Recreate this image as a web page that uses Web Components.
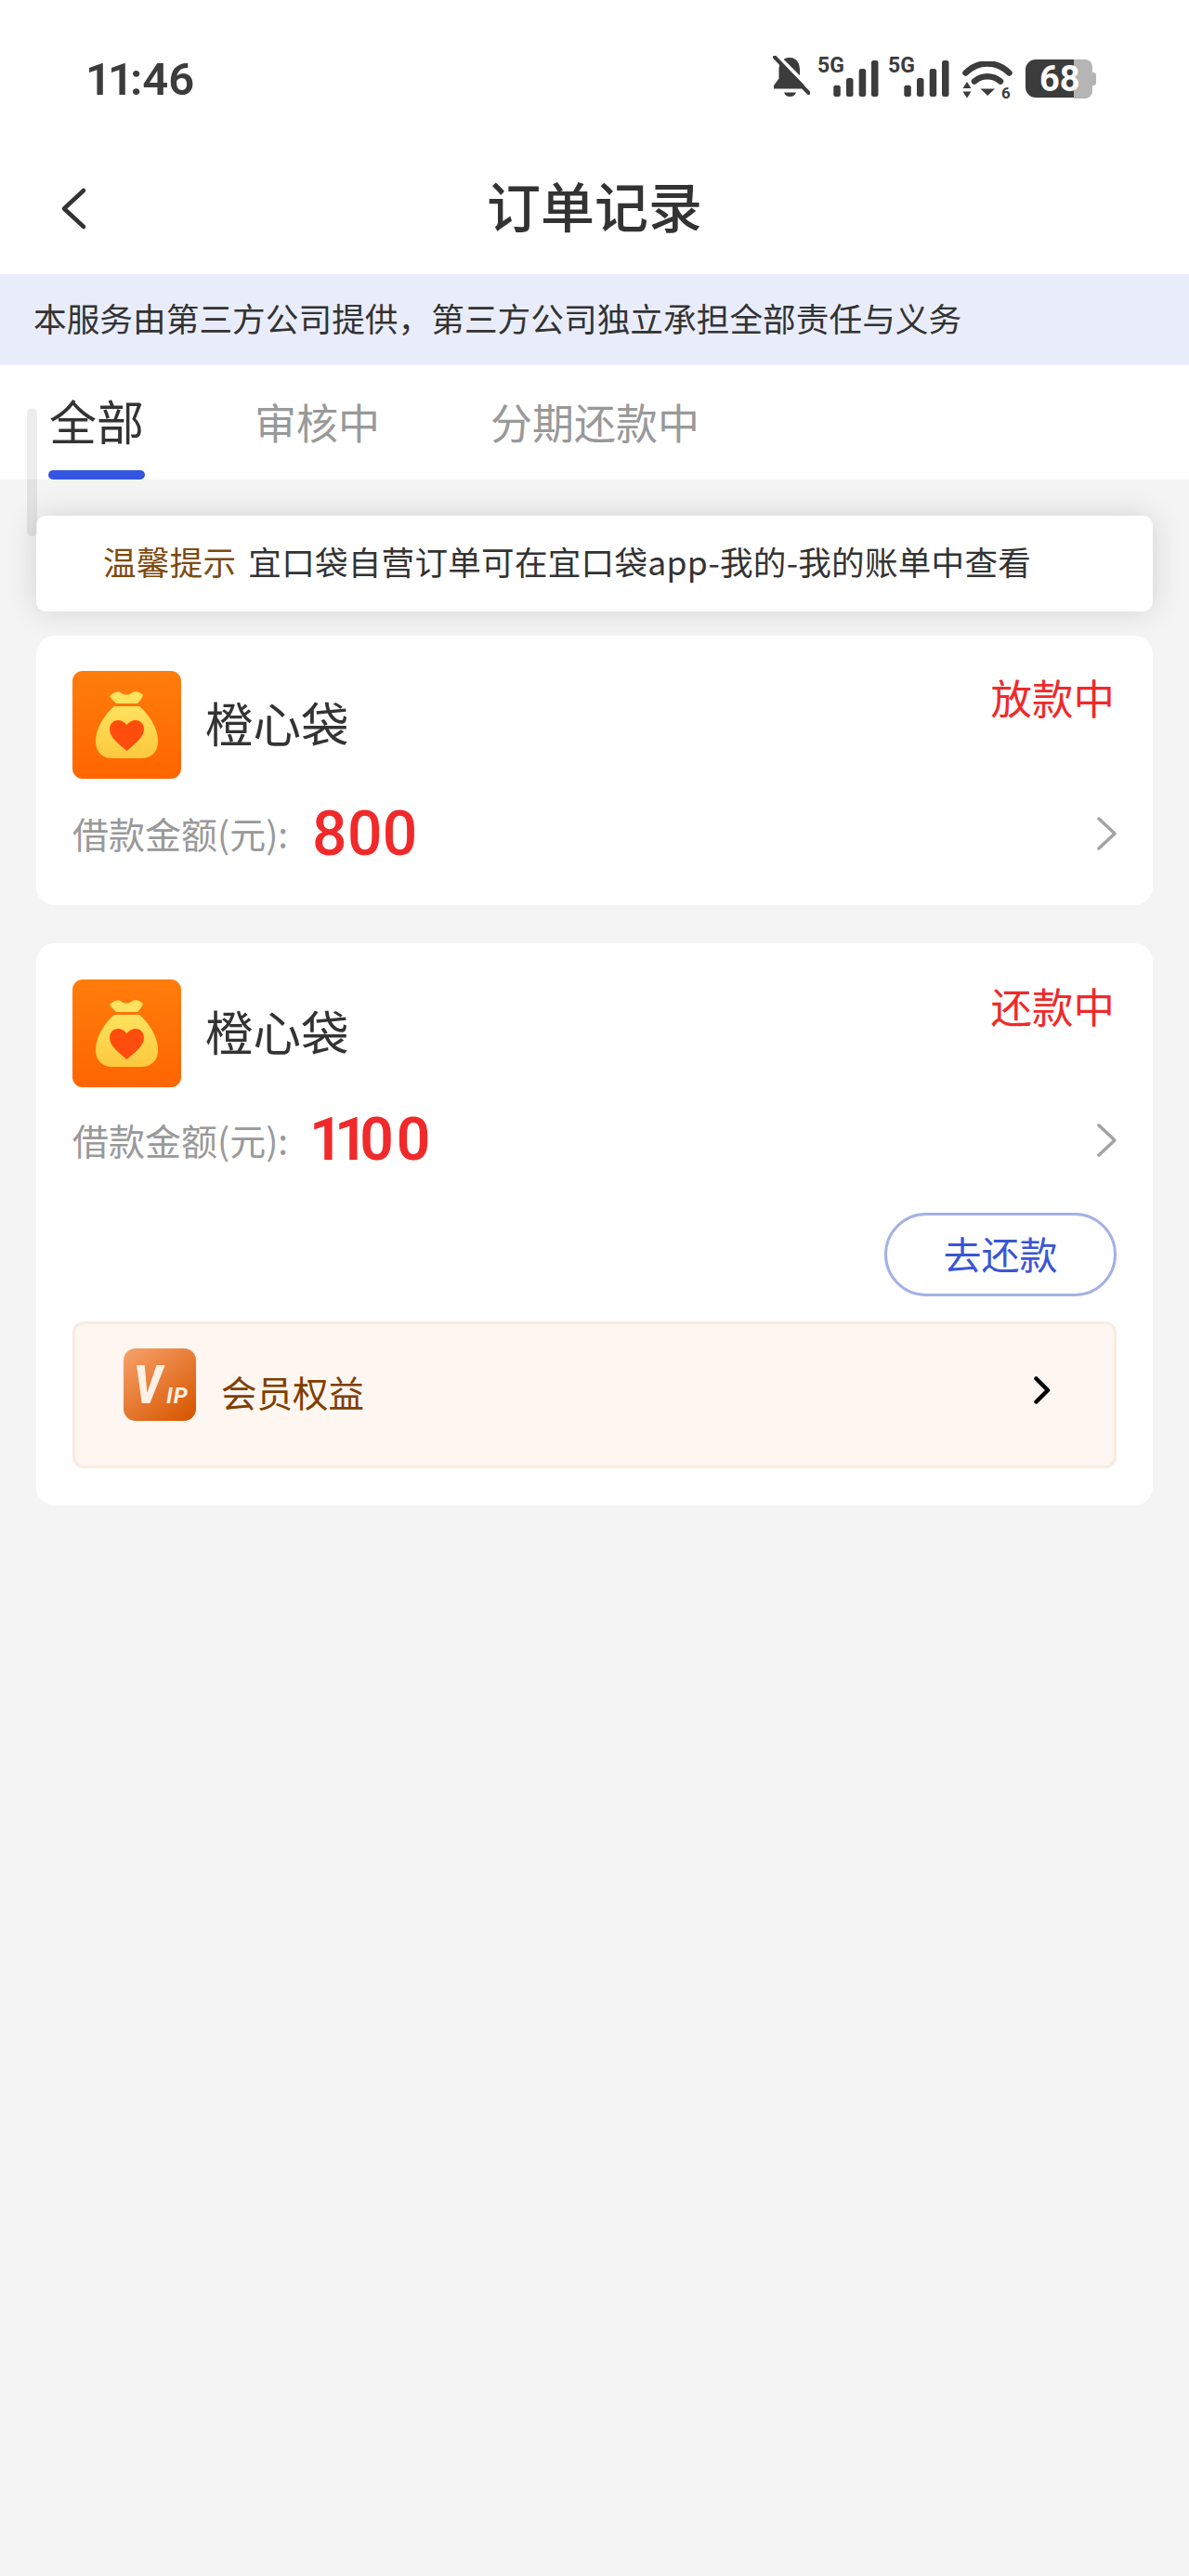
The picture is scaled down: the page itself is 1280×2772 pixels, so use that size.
<!DOCTYPE html>
<html lang="zh">
<head>
<meta charset="utf-8">
<title>订单记录</title>
<style>
  html, body { margin: 0; padding: 0; background: #f4f4f4; }
  body { font-family: "Noto Sans CJK SC", "Noto Sans", sans-serif; position: relative; min-height: 2772px; width: 1280px; overflow: hidden; }
</style>
</head>
<body>
<status-bar></status-bar>
<nav-bar>订单记录</nav-bar>
<info-banner>本服务由第三方公司提供，第三方公司独立承担全部责任与义务</info-banner>
<order-tabs></order-tabs>
<order-list>
  <tip-card label="温馨提示">宜口袋自营订单可在宜口袋app-我的-我的账单中查看</tip-card>
  <order-card name="橙心袋" status="放款中" amount="800"></order-card>
  <order-card name="橙心袋" status="还款中" amount="1100" class="repay">
    <pay-button>去还款</pay-button>
    <vip-row>会员权益</vip-row>
  </order-card>
</order-list>
<scroll-thumb></scroll-thumb>

<script>
const CJK = `"Noto Sans CJK SC", "Noto Sans", sans-serif`

class StatusBar extends HTMLElement {
    constructor(){
        super()
        this.attachShadow({mode: 'open'})
    }
    signal(){
        // viewBox is taller than the bars so the 5G label has room above
        return `
        <svg width="66" height="52" viewBox="0 -6 66 52" style="margin-top:-6px">
            <text x="0" y="18" font-family="Roboto, sans-serif" font-weight="700" font-size="23" fill="#3c3c3c">5G</text>
            <rect x="17.3" y="31.7" width="7.5" height="12.3" rx="2.5" fill="#3c3c3c"/>
            <rect x="31" y="24" width="7.5" height="20" rx="2.5" fill="#3c3c3c"/>
            <rect x="44.7" y="14" width="7.5" height="30" rx="2.5" fill="#3c3c3c"/>
            <rect x="58" y="5" width="7.5" height="39" rx="2.5" fill="#3c3c3c"/>
        </svg>`
    }
    connectedCallback(){
        this.shadowRoot.innerHTML = `
        <style>
            :host { display: flex; height: 150px; background: #fff; box-sizing: border-box; padding: 0 100px 0 92px; justify-content: space-between; font-family: Roboto, sans-serif; }
            .time { font-size: 49px; font-weight: 600; color: #3c3c3c; line-height: 56px; margin-top: 58px; }
            .time i { font-style: normal; letter-spacing: -4px; }
            .icons { display: flex; align-items: flex-start; padding-top: 60px; }
            svg { display: block; }
        </style>
        <div class="time"><i>11</i>:46</div>
        <div class="icons">
            <svg width="40" height="46" viewBox="0 0 40 46" style="margin-right:8px">
                <path d="M18 2c-7.500 0-11.500 6-11.500 13v9.500L1 32v3.500h33V32l-5-7.500V15C29 8 25.500 2 18 2z" fill="#3c3c3c"/>
                <path d="M12 39.500h13c-1 3-3.500 4.500-6.500 4.500S13 42.500 12 39.500z" fill="#3c3c3c"/>
                <path d="M5 0L43 38" stroke="#fff" stroke-width="4" fill="none"/>
                <path d="M2 1.500L38.500 40" stroke="#3c3c3c" stroke-width="4" stroke-linecap="round" fill="none"/>
            </svg>
            ${this.signal()}
            <span style="width:10px"></span>
            ${this.signal()}
            <svg width="54" height="44" viewBox="0 0 54 44" style="margin:6px 14px 0">
                <path d="M3.500 12.500C17 -1 37 -1 50.500 12.500" stroke="#3c3c3c" stroke-width="6.500" stroke-linecap="round" fill="none"/>
                <path d="M13 21.500C21 14.500 33 14.500 41 21.500" stroke="#3c3c3c" stroke-width="6.500" stroke-linecap="round" fill="none"/>
                <path d="M19.500 29.500h15.500L27.200 37z" fill="#3c3c3c"/>
                <path d="M5 22l4.500 7H.500zM5 39.500l4.500-7H.500z" fill="#3c3c3c"/>
                <text x="42" y="39.500" font-family="Roboto, sans-serif" font-weight="700" font-size="17" fill="#3c3c3c">6</text>
            </svg>
            <svg width="76" height="50" viewBox="0 0 76 50" style="margin-top:4px">
                <path d="M52 0h12a8 8 0 0 1 8 8v26a8 8 0 0 1-8 8H52z" fill="#b5b5b5"/>
                <path d="M72 14h1a3 3 0 0 1 3 3v8a3 3 0 0 1-3 3h-1z" fill="#b5b5b5"/>
                <path d="M11 0h41v41H11A11 11 0 0 1 0 30V11A11 11 0 0 1 11 0z" fill="#3c3c3c"/>
                <text x="15" y="34" font-family="Roboto, sans-serif" font-weight="700" font-size="38" fill="#fff">68</text>
            </svg>
        </div>`
    }
}

class NavBar extends HTMLElement {
    constructor(){
        super()
        this.attachShadow({mode: 'open'})
        this.shadowRoot.innerHTML = `
        <style>
            :host { display: flex; height: 145px; background: #fff; align-items: center; justify-content: center; position: relative; }
            h1 { margin: 0 0 6px; font: 500 58px/80px ${CJK}; color: #333; }
            svg { position: absolute; left: 64px; top: 50px; }
        </style>
        <svg width="32" height="48" viewBox="0 0 32 48"><path d="M26 5L5 24.500 26 44" fill="none" stroke="#333" stroke-width="4.500" stroke-linecap="round" stroke-linejoin="round"/></svg>
        <h1><slot></slot></h1>`
    }
}

class InfoBanner extends HTMLElement {
    constructor(){
        super()
        this.attachShadow({mode: 'open'})
        this.shadowRoot.innerHTML = `
        <style>
            :host { display: block; height: 98px; background: #e9edfb; box-sizing: border-box; padding-left: 36px; font: 400 35.7px/94px ${CJK}; color: #333; white-space: nowrap; }
        </style>
        <slot></slot>`
    }
}

class OrderTabs extends HTMLElement {
    constructor(){
        super()
        this.attachShadow({mode: 'open'})
        this.shadowRoot.innerHTML = `
        <style>
            :host { display: flex; height: 123px; background: #fff; position: relative; z-index: 2; font-family: ${CJK}; white-space: nowrap; }
            .tab { position: absolute; top: 26px; font-size: 45px; line-height: 70px; color: #999; }
            .on { font-size: 51px; color: #333; left: 52px; top: 24px; width: 104px; height: 99px; text-align: center; }
            .on::after { content: ""; position: absolute; left: 0; right: 0; bottom: 0; height: 10px; border-radius: 5px; background: #3355e0; }
        </style>
        <div class="tab on">全部</div>
        <div class="tab" style="left:274px">审核中</div>
        <div class="tab" style="left:528px">分期还款中</div>`
    }
}

class OrderList extends HTMLElement {
    constructor(){
        super()
        this.attachShadow({mode: 'open'})
        this.shadowRoot.innerHTML = `
        <style>
            :host { display: flex; flex-direction: column; padding: 39px 39px 0; }
        </style>
        <slot></slot>`
    }
}

class TipCard extends HTMLElement {
    constructor(){
        super()
        this.attachShadow({mode: 'open'})
    }
    connectedCallback(){
        this.shadowRoot.innerHTML = `
        <style>
            :host { display: block; height: 103px; background: #fff; border-radius: 10px; box-shadow: 0 0 32px rgba(0,0,0,.14); box-sizing: border-box; padding-left: 72px; font: 400 35.6px/97px ${CJK}; color: #333; white-space: nowrap; margin-bottom: 26px; letter-spacing: .25px; }
            b { font-weight: 400; color: #7f4a10; margin-right: 13px; }
        </style>
        <b>${this.getAttribute('label')}</b><slot></slot>`
    }
}

class BagIcon extends HTMLElement {
    constructor(){
        super()
        this.attachShadow({mode: 'open'})
        this.shadowRoot.innerHTML = `
        <style>:host { display: block; width: 117px; height: 116px; } svg { display: block; }</style>
        <svg width="117" height="116" viewBox="0 0 117 116">
            <defs>
                <linearGradient id="bg" x1="0" y1="0" x2="0" y2="1"><stop offset="0" stop-color="#ff7d0c"/><stop offset="1" stop-color="#ff6500"/></linearGradient>
                <linearGradient id="bag" x1="0" y1="0" x2="0" y2="1"><stop offset="0" stop-color="#ffe25e"/><stop offset="1" stop-color="#fdc83e"/></linearGradient>
            </defs>
            <rect width="117" height="116" rx="11" fill="url(#bg)"/>
            <path d="M40 27c4-4 9-6 13-3 3 2 7 2 10 0 4-3 9-2 13 2-1 3-3 6-6 9H47c-3-3-6-6-7-8z" fill="#ffe25e"/>
            <path d="M45 38h27C78 43 92 58 92 76 92 88 84 94 74 94H43C33 94 25 88 25 76 25 58 39 43 45 38z" fill="url(#bag)"/>
            <path d="M58.500 86C50 79 40 71 40 63c0-6 4-10 9-10 4 0 7 2 9.500 5 2.500-3 5.500-5 9.500-5 5 0 9 4 9 10 0 8-10 16-18.500 23z" fill="#ff4d0d"/>
        </svg>`
    }
}

class OrderCard extends HTMLElement {
    constructor(){
        super()
        this.attachShadow({mode: 'open'})
    }
    connectedCallback(){
        // the reference has a narrow 1, Roboto's is tabular
        const amount = this.getAttribute('amount').replace(/1/g, '<i>1</i>')
        this.shadowRoot.innerHTML = `
        <style>
            :host { display: block; background: #fff; border-radius: 20px; box-sizing: border-box; padding: 38px 39px 42px; margin-bottom: 41px; }
            :host(.repay) { padding-top: 39px; padding-bottom: 40px; }
            .head { display: flex; align-items: flex-start; }
            .name { font: 400 51.5px/110px ${CJK}; color: #333; margin-left: 26px; flex: 1; }
            .status { font: 400 44.5px/56px ${CJK}; color: #f02a2a; margin-right: 2px; }
            .row { display: flex; align-items: center; height: 70px; margin-top: 24px; }
            :host(.repay) .row { margin-top: 22px; }
            .label { font: 400 39px/64px ${CJK}; color: #999; width: 258px; margin-bottom: 3px; }
            .amount { font: 500 66px/70px Roboto, sans-serif; color: #f02a2a; flex: 1; letter-spacing: .4px; margin-top: 2px; }
            :host(.repay) .label { width: 255px; }
            :host(.repay) .amount { font-weight: 600; font-size: 64px; letter-spacing: 3px; margin-top: 0; }
            i { font-style: normal; letter-spacing: -9.500px; }
            svg { display: block; margin-right: -1px; }
        </style>
        <div class="head">
            <bag-icon></bag-icon>
            <div class="name">${this.getAttribute('name')}</div>
            <div class="status">${this.getAttribute('status')}</div>
        </div>
        <div class="row">
            <div class="label">借款金额(元):</div>
            <div class="amount">${amount}</div>
            <svg width="22" height="36" viewBox="0 0 22 36"><path d="M2 2l17 16L2 34" fill="none" stroke="#a3a3a3" stroke-width="3.500" stroke-linecap="round" stroke-linejoin="round"/></svg>
        </div>
        <slot></slot>`
    }
}

class PayButton extends HTMLElement {
    constructor(){
        super()
        this.attachShadow({mode: 'open'})
        this.shadowRoot.innerHTML = `
        <style>
            :host { display: flex; width: 250px; height: 90px; margin: 43px 0 27px auto; box-sizing: border-box; border: 3px solid #a3b1e4; border-radius: 45px; padding-bottom: 3px; align-items: center; justify-content: center; font: 400 41px/1 ${CJK}; color: #3a55d4; }
        </style>
        <slot></slot>`
    }
}

class VipRow extends HTMLElement {
    constructor(){
        super()
        this.attachShadow({mode: 'open'})
        this.shadowRoot.innerHTML = `
        <style>
            :host { display: flex; height: 158px; box-sizing: border-box; align-items: center; background: #fdf6f1; border: 3px solid #f9ebe3; border-radius: 12px; padding: 0 68px 0 52px; font: 400 38.5px/1 ${CJK}; color: #7f3e00; }
            .logo { margin-bottom: 22px; display: block; }
            .txt { flex: 1; margin-left: 27px; margin-bottom: 7px; }
            .go { display: block; margin-bottom: 10px; }
        </style>
        <svg class="logo" width="78" height="78" viewBox="0 0 78 78">
            <defs><linearGradient id="vg" x1="0" y1="0" x2=".8" y2="1"><stop offset="0" stop-color="#f7a26a"/><stop offset="1" stop-color="#d95a05"/></linearGradient></defs>
            <rect width="78" height="78" rx="13" fill="url(#vg)"/>
            <text transform="translate(11 59) scale(1.1 1.35)" font-family="Roboto, sans-serif" font-weight="900" font-style="italic" font-size="43" fill="#fdf0e5">V</text>
            <text x="46" y="59" font-family="Roboto, sans-serif" font-weight="700" font-style="italic" font-size="24" letter-spacing="1" fill="#fdf0e5">IP</text>
        </svg>
        <div class="txt"><slot></slot></div>
        <svg class="go" width="18" height="30" viewBox="0 0 18 30"><path d="M2.500 2.500L15 15 2.500 27.500" fill="none" stroke="#000" stroke-width="4.500" stroke-linecap="round" stroke-linejoin="round"/></svg>`
    }
}

class ScrollThumb extends HTMLElement {
    constructor(){
        super()
        this.attachShadow({mode: 'open'})
        this.shadowRoot.innerHTML = `
        <style>
            :host { position: absolute; z-index: 3; left: 29px; top: 439px; width: 11px; height: 138px; border-radius: 6px; background: rgba(0,0,0,.07); }
        </style>`
    }
}

customElements.define('status-bar', StatusBar)
customElements.define('nav-bar', NavBar)
customElements.define('info-banner', InfoBanner)
customElements.define('order-tabs', OrderTabs)
customElements.define('order-list', OrderList)
customElements.define('tip-card', TipCard)
customElements.define('bag-icon', BagIcon)
customElements.define('order-card', OrderCard)
customElements.define('pay-button', PayButton)
customElements.define('vip-row', VipRow)
customElements.define('scroll-thumb', ScrollThumb)
</script>
</body>
</html>
